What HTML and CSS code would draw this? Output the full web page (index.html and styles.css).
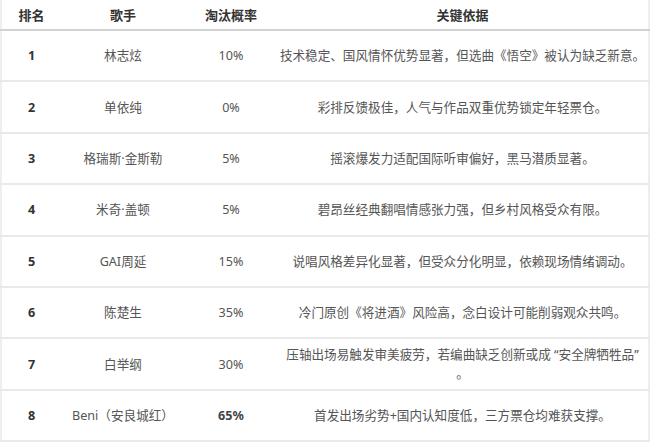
FILE: index.html
```html
<!DOCTYPE html>
<html lang="zh-CN">
<head>
<meta charset="utf-8">
<link rel="stylesheet" href="styles.css">
</head>
<body>
<table class="rank-table">
  <colgroup>
    <col class="c-rank">
    <col class="c-singer">
    <col class="c-prob">
    <col class="c-reason">
  </colgroup>
  <thead>
    <tr><th>排名</th><th>歌手</th><th>淘汰概率</th><th>关键依据</th></tr>
  </thead>
  <tbody>
    <tr><td class="rank">1</td><td>林志炫</td><td>10%</td><td>技术稳定、国风情怀优势显著，但选曲《悟空》被认为缺乏新意。</td></tr>
    <tr><td class="rank">2</td><td>单依纯</td><td>0%</td><td>彩排反馈极佳，人气与作品双重优势锁定年轻票仓。</td></tr>
    <tr><td class="rank">3</td><td>格瑞斯·金斯勒</td><td>5%</td><td>摇滚爆发力适配国际听审偏好，黑马潜质显著。</td></tr>
    <tr><td class="rank">4</td><td>米奇·盖顿</td><td>5%</td><td>碧昂丝经典翻唱情感张力强，但乡村风格受众有限。</td></tr>
    <tr><td class="rank">5</td><td>GAI周延</td><td>15%</td><td>说唱风格差异化显著，但受众分化明显，依赖现场情绪调动。</td></tr>
    <tr><td class="rank">6</td><td>陈楚生</td><td>35%</td><td>冷门原创《将进酒》风险高，念白设计可能削弱观众共鸣。</td></tr>
    <tr><td class="rank">7</td><td>白举纲</td><td>30%</td><td>压轴出场易触发审美疲劳，若编曲缺乏创新或成 “安全牌牺牲品”<br>。</td></tr>
    <tr><td class="rank">8</td><td>Beni（安良城红）</td><td class="strong">65%</td><td>首发出场劣势+国内认知度低，三方票仓均难获支撑。</td></tr>
  </tbody>
</table>
</body>
</html>
```

FILE: styles.css
```css
html, body {
  margin: 0;
  padding: 0;
  background: #ffffff;
}

body {
  font-family: "Noto Sans", "Noto Sans CJK SC", sans-serif;
  font-size: 13px;
  color: #555555;
}

.rank-table {
  width: 650px;
  border-collapse: collapse;
  table-layout: fixed;
  border-left: 2px solid #eeeeee;
  border-right: 2px solid #eeeeee;
}

.c-rank { width: 60px; }
.c-singer { width: 124px; }
.c-prob { width: 92px; }
.c-reason { width: auto; }

.rank-table th {
  height: 29px;
  padding: 0;
  font-weight: bold;
  color: #333333;
  text-align: center;
  vertical-align: middle;
  border-bottom: 2px solid #d2d2d2;
  line-height: 18px;
}

.rank-table td {
  height: 49.4px;
  padding: 0;
  font-size: 12.6px;
  text-align: center;
  vertical-align: middle;
  border-bottom: 2px solid #e9e9e9;
  line-height: 19px;
  white-space: nowrap;
}

.rank-table td.rank {
  font-weight: bold;
  color: #333333;
}

.rank-table td.strong {
  font-weight: bold;
  color: #444444;
}
```
